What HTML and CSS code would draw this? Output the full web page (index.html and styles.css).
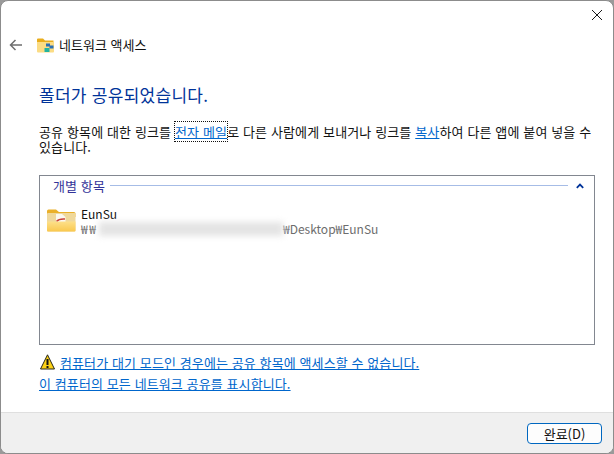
FILE: index.html
```html
<!DOCTYPE html>
<html lang="ko">
<head>
<meta charset="utf-8">
<title>네트워크 액세스</title>
<link rel="stylesheet" href="styles.css">
</head>
<body>
<div class="window">
  <div class="titlebar">
    <svg class="close" width="12" height="12" viewBox="0 0 12 12"><path d="M1 1L11 11M11 1L1 11" stroke="#1a1a1a" stroke-width="1" fill="none"/></svg>
  </div>
  <div class="nav">
    <svg class="back" width="14" height="12" viewBox="0 0 14 12"><path d="M13 6H2M6.500 1L1.500 6L6.500 11" stroke="#6e6e6e" stroke-width="1.500" fill="none"/></svg>
    <svg class="nav-icon" width="17" height="15" viewBox="0 0 17 15">
      <path d="M0 1.500Q0 .5 1 .5H6L8 2.500H16.500V5H0Z" fill="#e9ad1c"/>
      <path d="M0 4H17V13.500Q17 14.500 16 14.500H1Q0 14.500 0 13.500Z" fill="#fbdc84"/>
      <rect x="9" y="5.500" width="4" height="3" fill="#2b6fb3"/>
      <rect x="12.500" y="7.500" width="4" height="3" fill="#2b6fb3"/>
      <rect x="7.500" y="10" width="5" height="4" fill="#22b3a0"/>
    </svg>
    <span class="nav-title">네트워크 액세스</span>
  </div>
  <main class="content">
    <h1 class="heading">폴더가 공유되었습니다.</h1>
    <p class="desc">공유 항목에 대한 링크를 <a class="link focused">전자 메일</a>로 다른 사람에게 보내거나 링크를 <a class="link">복사</a>하여 다른 앱에 붙여 넣을 수 있습니다.</p>
    <section class="list">
      <div class="group">
        <span class="group-name">개별 항목</span>
        <span class="group-line"></span>
        <svg class="chevron" width="8" height="6" viewBox="0 0 8 6"><path d="M.8 4.800L4 1.600L7.200 4.800" stroke="#003399" stroke-width="1.800" fill="none"/></svg>
      </div>
      <div class="item">
        <svg class="item-icon" width="29" height="23" viewBox="0 0 29 23">
          <defs>
            <linearGradient id="folderFront" x1="0" y1="0" x2="0" y2="1">
              <stop offset="0" stop-color="#fde08a"/>
              <stop offset="1" stop-color="#f9c84e"/>
            </linearGradient>
          </defs>
          <path d="M0 2Q0 .5 1.500 .5H9L12 3H27Q28.500 3 28.500 4.500V8H0Z" fill="#eab02a"/>
          <rect x="0" y="4" width="28.500" height="18.500" rx="1" fill="#efd89b"/>
          <path d="M9 5H15L18.500 8V13H9Z" fill="#fbf8f0"/>
          <path d="M9.500 12.500Q12 9.500 18 10" stroke="#c9413a" stroke-width="1.500" fill="none"/>
          <path d="M0 12.500H28.500V21.500Q28.500 22.500 27.500 22.500H1Q0 22.500 0 21.500Z" fill="url(#folderFront)"/>
        </svg>
        <div class="item-text">
          <div class="item-name">EunSu</div>
          <div class="item-path"><span class="unc">₩₩</span><span class="blur"></span><span>₩Desktop₩EunSu</span></div>
        </div>
      </div>
    </section>
    <div class="warning">
      <svg class="warn-icon" width="15" height="16" viewBox="0 0 15 16">
        <path d="M7.500 .8L14.500 15H.5Z" fill="#fcd116" stroke="#26261c" stroke-width="1" stroke-linejoin="round"/>
        <rect x="6.500" y="5" width="2" height="6" fill="#111"/>
        <rect x="6.500" y="12" width="2" height="2" fill="#111"/>
      </svg>
      <a class="link">컴퓨터가 대기 모드인 경우에는 공유 항목에 액세스할 수 없습니다.</a>
    </div>
    <div class="all-shares"><a class="link">이 컴퓨터의 모든 네트워크 공유를 표시합니다.</a></div>
  </main>
  <footer class="footer">
    <button class="done">완료(D)</button>
  </footer>
</div>
</body>
</html>
```
FILE: styles.css
```css
html, body {
  margin: 0;
  padding: 0;
  width: 614px;
  height: 454px;
  overflow: hidden;
  background: #9a9a9a;
}
.window {
  box-sizing: border-box;
  width: 614px;
  height: 454px;
  display: flex;
  flex-direction: column;
  background: #fff;
  border: 1px solid #8c8c8c;
  border-radius: 8px;
  overflow: hidden;
  font-family: "Noto Sans CJK KR", "Noto Sans", sans-serif;
  font-size: 13px;
  letter-spacing: 0.1px;
  color: #111;
}
.titlebar {
  height: 29px;
  display: flex;
  justify-content: flex-end;
  align-items: flex-start;
  padding: 8px 10px 0 0;
  box-sizing: border-box;
}
.close { display: block; }
.nav {
  height: 30px;
  display: flex;
  align-items: center;
  padding-left: 8px;
}
.back { margin-right: 14px; }
.nav-icon { margin-right: 5px; }
.nav-title { font-size: 13px; letter-spacing: 0; margin-bottom: 2px; }
.content {
  flex: 1;
  display: flex;
  flex-direction: column;
  padding: 0 18px 0 38px;
  min-height: 0;
}
.heading {
  margin: 23px 0 0;
  height: 24px;
  line-height: 24px;
  font-size: 17px;
  font-weight: 400;
  letter-spacing: 0.28px;
  color: #003399;
}
.desc {
  margin: 17px 0 0;
  line-height: 15px;
  height: 30px;
  width: 556px;
  letter-spacing: 0.13px;
}
.link {
  color: #0066cc;
  text-decoration: underline;
}
.focused { outline: 1px dotted #111; outline-offset: 0; }
.list {
  box-sizing: border-box;
  margin-top: 21px;
  width: 556px;
  height: 170px;
  border: 1px solid #828790;
  padding: 0 0 0 7px;
  flex: none;
}
.group {
  display: flex;
  align-items: center;
  height: 19px;
  padding-left: 6px;
}
.group-name { color: #333399; }
.group-line {
  flex: 1;
  height: 1px;
  margin: 0 8px 0 5px;
  background: #a6bce6;
}
.chevron { margin-right: 10px; }
.item {
  display: flex;
  align-items: flex-start;
  margin-top: 13px;
}
.item-icon { margin-top: 1px; margin-right: 5px; }
.item-text { margin-top: -2px; letter-spacing: 0; }
.item-name { height: 15px; line-height: 15px; font-size: 12px; }
.item-path {
  display: flex;
  align-items: center;
  height: 15px;
  line-height: 15px;
  font-size: 12px;
  color: #6d6d6d;
}
.unc { width: 18px; white-space: nowrap; letter-spacing: 1.500px; flex: none; }
.blur {
  width: 184px;
  height: 14px;
  background: #e4e4e4;
  filter: blur(3px);
}
.warning {
  display: flex;
  align-items: center;
  margin-top: 9px;
  height: 16px;
}
.warn-icon { margin: 0 5px 0 1px; }
.all-shares {
  margin-top: 6px;
  height: 16px;
  line-height: 16px;
}
.footer {
  box-sizing: border-box;
  height: 41px;
  flex: none;
  display: flex;
  justify-content: flex-end;
  align-items: center;
  padding-right: 11px;
  background: #f0f0f0;
  border-top: 1px solid #dfdfdf;
}
.done {
  box-sizing: border-box;
  width: 75px;
  height: 21px;
  padding: 0;
  background: #fdfdfd;
  border: 1px solid #0067c0;
  border-radius: 4px;
  font-family: inherit;
  font-size: 13px;
  line-height: 17px;
  color: #111;
}
```
